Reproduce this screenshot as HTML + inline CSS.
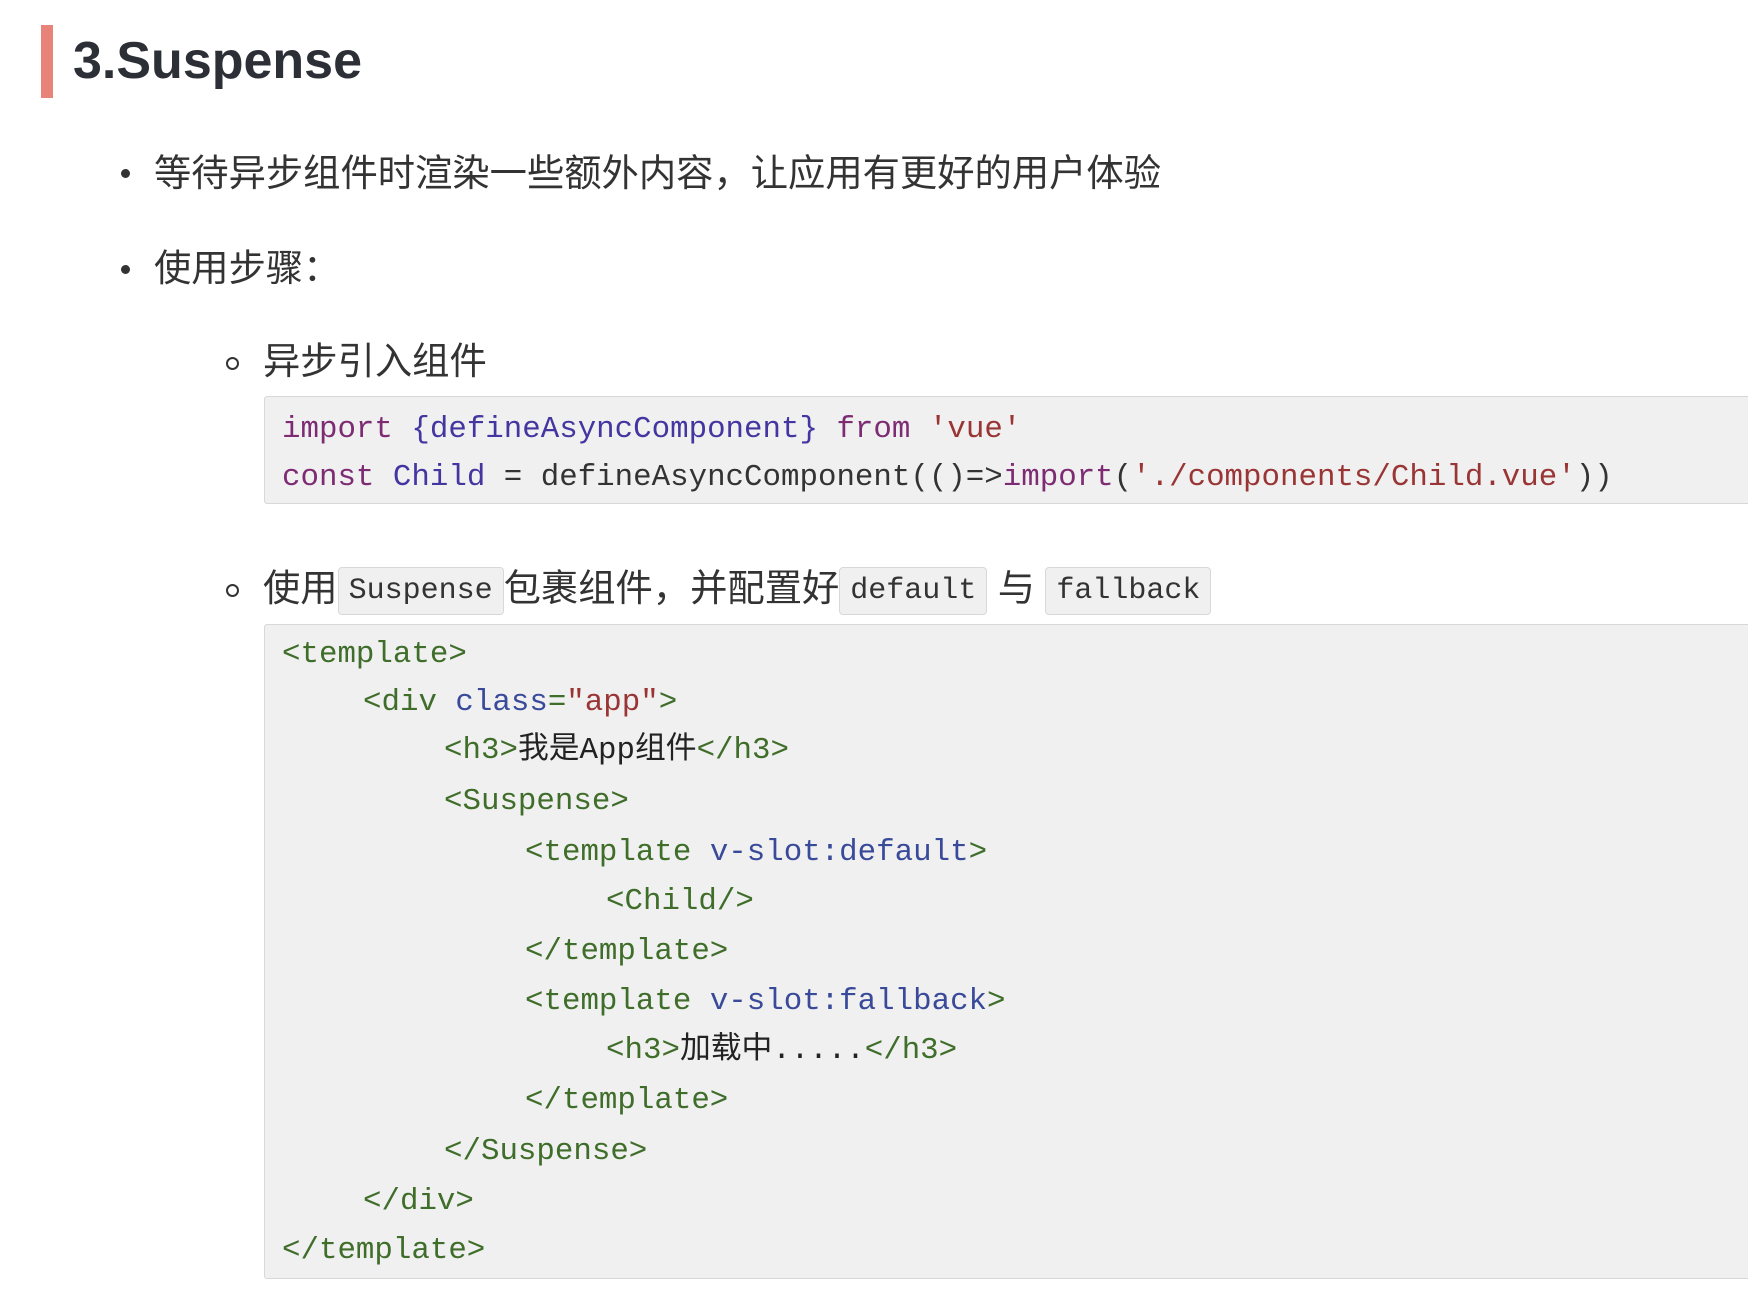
<!DOCTYPE html>
<html><head><meta charset="utf-8"><style>
body{margin:0;width:1748px;height:1306px;background:#fff;position:relative;overflow:hidden;font-family:"Liberation Sans","Noto Sans CJK SC",sans-serif;color:#333}
.a{position:absolute;white-space:pre}
.bar{position:absolute;left:41px;top:25px;width:12px;height:73px;background:#e8837a}
h1{position:absolute;left:73px;top:26px;margin:0;font-size:52px;font-weight:bold;color:#2c2f36;line-height:70px}
.t{font-size:37.3px;line-height:44px}
.dot{position:absolute;width:9px;height:9px;border-radius:50%;background:#333}
.circ{position:absolute;width:9px;height:9px;border-radius:50%;border:2px solid #333}
.box{position:absolute;left:264px;right:-10px;background:#f0f0f0;border:1px solid #d8d8d8;border-radius:3px}
.c{position:absolute;font-family:"Liberation Mono","Noto Sans CJK SC",monospace;font-size:30.8px;line-height:40px;white-space:pre;color:#333}
.ic{display:inline-block;font-family:"Liberation Mono",monospace;font-size:30px;background:#f0f0f0;border:1px solid #d8d8d8;border-radius:4px;padding:0 10px;line-height:46px;vertical-align:middle}
.k{color:#7d2c74}.f{color:#4436a0}.s{color:#9a3535}.g{color:#3f6d2a}.b{color:#3a4a9a}
</style></head><body>
<div class="bar"></div>
<h1>3.Suspense</h1>
<div class="dot" style="left:121px;top:169px"></div>
<div class="a t" style="left:154px;top:151px">等待异步组件时渲染一些额外内容，让应用有更好的用户体验</div>
<div class="dot" style="left:121px;top:265px"></div>
<div class="a t" style="left:154px;top:246px">使用步骤：</div>
<div class="circ" style="left:226px;top:357px"></div>
<div class="a t" style="left:263px;top:339px">异步引入组件</div>
<div class="box" style="top:396px;height:106px"></div>
<div class="c" style="left:282px;top:410px"><span class="k">import</span> <span class="f">{defineAsyncComponent}</span> <span class="k">from</span> <span class="s">'vue'</span></div>
<div class="c" style="left:282px;top:458px"><span class="k">const</span> <span class="f">Child</span> = defineAsyncComponent(()=&gt;<span class="k">import</span>(<span class="s">'./components/Child.vue'</span>))</div>
<div class="circ" style="left:226px;top:584px"></div>
<div class="a t" style="left:263px;top:566px">使用<span class="ic">Suspense</span>包裹组件，并配置好<span class="ic">default</span> 与 <span class="ic">fallback</span></div>
<div class="box" style="top:624px;height:653px"></div>
<div class="c g" style="left:282px;top:635px">&lt;template&gt;</div>
<div class="c g" style="left:363px;top:683px">&lt;div <span class="b">class</span>=<span class="s">"app"</span>&gt;</div>
<div class="c g" style="left:444px;top:731px">&lt;h3&gt;<span style="color:#222">我是App组件</span>&lt;/h3&gt;</div>
<div class="c g" style="left:444px;top:782px">&lt;Suspense&gt;</div>
<div class="c g" style="left:525px;top:833px">&lt;template <span class="b">v-slot:default</span>&gt;</div>
<div class="c g" style="left:606px;top:882px">&lt;Child/&gt;</div>
<div class="c g" style="left:525px;top:932px">&lt;/template&gt;</div>
<div class="c g" style="left:525px;top:982px">&lt;template <span class="b">v-slot:fallback</span>&gt;</div>
<div class="c g" style="left:606px;top:1031px">&lt;h3&gt;<span style="color:#222">加载中.....</span>&lt;/h3&gt;</div>
<div class="c g" style="left:525px;top:1081px">&lt;/template&gt;</div>
<div class="c g" style="left:444px;top:1132px">&lt;/Suspense&gt;</div>
<div class="c g" style="left:363px;top:1182px">&lt;/div&gt;</div>
<div class="c g" style="left:282px;top:1231px">&lt;/template&gt;</div>
</body></html>
